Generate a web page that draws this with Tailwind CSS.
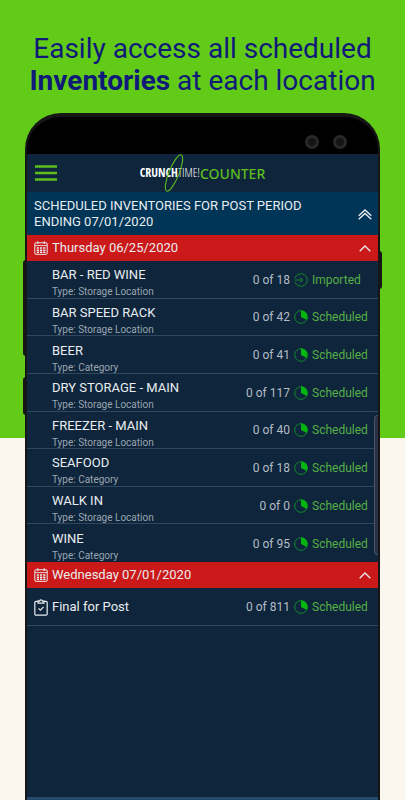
<!DOCTYPE html>
<html lang="en">
<head>
  <meta charset="UTF-8" />
  <meta name="viewport" content="width=device-width, initial-scale=1.0"/>
  <title>CrunchTime Counter - Scheduled Inventories</title>
  <script src="https://cdn.jsdelivr.net/npm/@tailwindcss/browser@4"></script>
</head>
<body class="bg-[#fbf7ef] font-['Roboto',sans-serif]">

  <!-- Shared icons -->
  <svg class="hidden" xmlns="http://www.w3.org/2000/svg">
    <symbol id="icon-calendar" viewBox="0 0 14 14">
      <g fill="none" stroke="currentColor">
        <rect x="0.8" y="1.8" width="12.4" height="11.5" rx="1.2" stroke-width="1" />
        <path d="M1 4.6h12" stroke-width="0.9" />
        <path d="M3.8 0.3v2.6M10.2 0.3v2.6" stroke-width="1.1" />
        <path d="M2.8 7h8.6M2.8 9.2h8.6M2.8 11.3h8.6" stroke-width="1.5" stroke-dasharray="2.2 1" />
      </g>
    </symbol>
    <symbol id="icon-chevron-up" viewBox="0 0 12 7">
      <path d="M0.7 6.3 6 1l5.3 5.3" fill="none" stroke="currentColor" stroke-width="1.3" />
    </symbol>
    <symbol id="icon-scheduled" viewBox="0 0 14 14">
      <circle cx="7" cy="7" r="6.3" fill="none" stroke="#128a2b" stroke-width="1" />
      <path d="M7 7V0.4A6.6 6.6 0 0 1 12.8 10Z" fill="#04b50f" />
    </symbol>
  </svg>

  <div class="relative isolate flex min-h-screen flex-col overflow-hidden">
    <div class="absolute inset-x-0 top-0 -z-10 h-[438px] bg-[#62cb17]"></div>

    <h1 class="pt-[33px] text-center text-[28px] leading-[32px] font-normal text-[#101a78]">
      Easily access all scheduled<br><b class="font-bold">Inventories</b> at each location
    </h1>

    <!-- Phone -->
    <div class="relative mx-[25px] mt-4 flex grow flex-col rounded-t-[36px] border-x-2 border-t-4 border-[#161616] bg-black">
      <span class="absolute top-[143px] -left-1 h-[96px] w-[3px] rounded-l-sm bg-[#161616]"></span>
      <span class="absolute top-[260px] -left-1 h-[38px] w-[3px] rounded-l-sm bg-[#161616]"></span>
      <span class="absolute top-[134px] -right-1 h-[38px] w-[3px] rounded-r-sm bg-[#161616]"></span>

      <div class="flex h-[37px] items-center justify-end gap-[14px] pt-[12px] pr-[31px]">
        <span class="size-[14px] rounded-full border-3 border-[#282828] bg-[#141414]"></span>
        <span class="size-[14px] rounded-full border-3 border-[#282828] bg-[#141414]"></span>
      </div>

      <!-- Screen -->
      <div class="relative flex grow flex-col bg-[#0e253c] text-[#e9edf0]">
        <header class="relative flex h-[38px] items-center justify-center">
          <button type="button" aria-label="Menu" class="absolute left-2 text-[#5fbe1e]">
            <svg class="h-4 w-[22px]" viewBox="0 0 22 16" stroke="currentColor" stroke-width="2.4">
              <path d="M0 1.5h22M0 8h22M0 14.5h22" />
            </svg>
          </button>
          <a href="#" class="relative flex items-center">
            <span class="font-['Open_Sans_Condensed','Liberation_Sans_Narrow',sans-serif] text-[12px] text-white"><b class="font-bold">CRUNCH</b><span class="font-['Open_Sans_Condensed_Light','Open_Sans_Condensed','Liberation_Sans_Narrow',sans-serif] font-light">TIME!</span></span>
            <span class="font-['Noto_Sans',sans-serif] text-[14px] font-medium text-[#5fbe1e]">COUNTER</span>
            <svg class="absolute -top-[9px] left-[23px] h-[38px] w-[22px]" viewBox="0 0 22 38" fill="none" stroke="#5fbe1e">
              <ellipse cx="11" cy="19" rx="5" ry="19.5" stroke-width="1.1" transform="rotate(22 11 19)" />
            </svg>
          </a>
        </header>

        <section class="flex h-[43px] items-center justify-between bg-[#003557] pt-px pr-[6px] pl-[7px]">
          <h2 class="text-[13px] leading-4">SCHEDULED INVENTORIES FOR POST PERIOD<br>ENDING 07/01/2020</h2>
          <button type="button" aria-label="Collapse all">
            <svg class="h-[11px] w-[14px]" viewBox="0 0 14 11" fill="none" stroke="currentColor" stroke-width="1.4">
              <path d="M0.7 6.8 7 1l6.3 5.8M0.7 10.3 7 4.5l6.3 5.8" />
            </svg>
          </button>
        </section>

        <button type="button" class="flex h-[26px] items-center gap-1 bg-[#cb1818] pr-[7px] pl-[7px] text-left text-[13px]">
          <svg class="size-[14px]"><use href="#icon-calendar" /></svg>
          <span class="grow">Thursday 06/25/2020</span>
          <svg class="h-[7px] w-3"><use href="#icon-chevron-up" /></svg>
        </button>

        <ul class="grid h-[301px] auto-rows-fr divide-y divide-[#30485f]">
          <li class="flex items-center pt-px pl-[25px]">
            <div class="grow pt-[7px]">
              <p class="text-[13px] leading-[18px]">BAR - RED WINE</p>
              <p class="text-[10px] leading-4 text-[#9aa5b0]">Type: Storage Location</p>
            </div>
            <span class="text-[12px] text-[#b4bcc5]">0 of 18</span>
            <svg class="mx-1 size-[14px]" viewBox="0 0 14 14" fill="none" stroke="#128a2b">
              <path d="M0.9 5.2A6.3 6.3 0 1 1 0.9 8.8M0.5 7h8M6 4.4 8.6 7 6 9.6" />
            </svg>
            <span class="w-[66px] text-[12px] text-[#55b045]">Imported</span>
          </li>
          <li class="flex items-center pt-px pl-[25px]">
            <div class="grow pt-[7px]">
              <p class="text-[13px] leading-[18px]">BAR SPEED RACK</p>
              <p class="text-[10px] leading-4 text-[#9aa5b0]">Type: Storage Location</p>
            </div>
            <span class="text-[12px] text-[#b4bcc5]">0 of 42</span>
            <svg class="mx-1 size-[14px]"><use href="#icon-scheduled" /></svg>
            <span class="w-[66px] text-[12px] text-[#55b045]">Scheduled</span>
          </li>
          <li class="flex items-center pt-px pl-[25px]">
            <div class="grow pt-[7px]">
              <p class="text-[13px] leading-[18px]">BEER</p>
              <p class="text-[10px] leading-4 text-[#9aa5b0]">Type: Category</p>
            </div>
            <span class="text-[12px] text-[#b4bcc5]">0 of 41</span>
            <svg class="mx-1 size-[14px]"><use href="#icon-scheduled" /></svg>
            <span class="w-[66px] text-[12px] text-[#55b045]">Scheduled</span>
          </li>
          <li class="flex items-center pt-px pl-[25px]">
            <div class="grow pt-[7px]">
              <p class="text-[13px] leading-[18px]">DRY STORAGE - MAIN</p>
              <p class="text-[10px] leading-4 text-[#9aa5b0]">Type: Storage Location</p>
            </div>
            <span class="text-[12px] text-[#b4bcc5]">0 of 117</span>
            <svg class="mx-1 size-[14px]"><use href="#icon-scheduled" /></svg>
            <span class="w-[66px] text-[12px] text-[#55b045]">Scheduled</span>
          </li>
          <li class="flex items-center pt-px pl-[25px]">
            <div class="grow pt-[7px]">
              <p class="text-[13px] leading-[18px]">FREEZER - MAIN</p>
              <p class="text-[10px] leading-4 text-[#9aa5b0]">Type: Storage Location</p>
            </div>
            <span class="text-[12px] text-[#b4bcc5]">0 of 40</span>
            <svg class="mx-1 size-[14px]"><use href="#icon-scheduled" /></svg>
            <span class="w-[66px] text-[12px] text-[#55b045]">Scheduled</span>
          </li>
          <li class="flex items-center pt-px pl-[25px]">
            <div class="grow pt-[7px]">
              <p class="text-[13px] leading-[18px]">SEAFOOD</p>
              <p class="text-[10px] leading-4 text-[#9aa5b0]">Type: Category</p>
            </div>
            <span class="text-[12px] text-[#b4bcc5]">0 of 18</span>
            <svg class="mx-1 size-[14px]"><use href="#icon-scheduled" /></svg>
            <span class="w-[66px] text-[12px] text-[#55b045]">Scheduled</span>
          </li>
          <li class="flex items-center pt-px pl-[25px]">
            <div class="grow pt-[7px]">
              <p class="text-[13px] leading-[18px]">WALK IN</p>
              <p class="text-[10px] leading-4 text-[#9aa5b0]">Type: Storage Location</p>
            </div>
            <span class="text-[12px] text-[#b4bcc5]">0 of 0</span>
            <svg class="mx-1 size-[14px]"><use href="#icon-scheduled" /></svg>
            <span class="w-[66px] text-[12px] text-[#55b045]">Scheduled</span>
          </li>
          <li class="flex items-center pt-px pl-[25px]">
            <div class="grow pt-[7px]">
              <p class="text-[13px] leading-[18px]">WINE</p>
              <p class="text-[10px] leading-4 text-[#9aa5b0]">Type: Category</p>
            </div>
            <span class="text-[12px] text-[#b4bcc5]">0 of 95</span>
            <svg class="mx-1 size-[14px]"><use href="#icon-scheduled" /></svg>
            <span class="w-[66px] text-[12px] text-[#55b045]">Scheduled</span>
          </li>
        </ul>

        <button type="button" class="flex h-[26px] items-center gap-1 bg-[#cb1818] pr-[7px] pl-[7px] text-left text-[13px]">
          <svg class="size-[14px]"><use href="#icon-calendar" /></svg>
          <span class="grow">Wednesday 07/01/2020</span>
          <svg class="h-[7px] w-3"><use href="#icon-chevron-up" /></svg>
        </button>

        <div class="flex h-[38px] items-center border-b border-[#30485f] pt-px pl-[7px] text-[12px]">
          <svg class="mr-1 h-[17px] w-[14px]" viewBox="0 0 14 17" fill="none" stroke="currentColor" stroke-width="1.2">
            <rect x="0.8" y="2.4" width="12.4" height="13.8" rx="1.2" />
            <path d="M4 4.2V2.2h1.6a1.4 1.4 0 0 1 2.8 0H10v2z" fill="#0e253c" />
            <path d="m4.5 9.3 1.9 1.9 3.2-3.3" />
          </svg>
          <span class="grow text-[13px]">Final for Post</span>
          <span class="text-[#b4bcc5]">0 of 811</span>
          <svg class="mx-1 size-[14px]"><use href="#icon-scheduled" /></svg>
          <span class="w-[66px] text-[#55b045]">Scheduled</span>
        </div>

        <div class="mt-auto h-[3px] bg-[#24496a]"></div>

        <!-- Edge panel handle -->
        <span class="absolute top-[261px] right-0 h-[140px] w-1 rounded-l-sm border-y border-l border-[#4b5563] bg-[#2a3146]"></span>
      </div>
    </div>
  </div>
</body>
</html>
